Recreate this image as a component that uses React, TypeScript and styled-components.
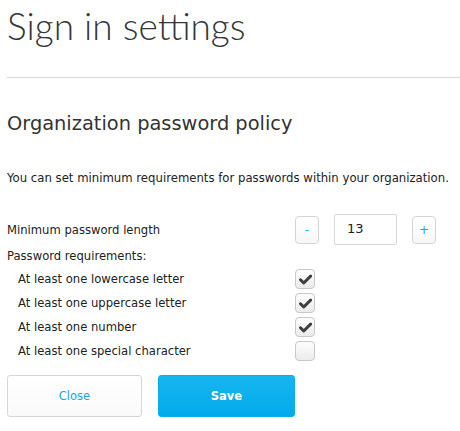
import React, { useState } from 'react'
import styled, { createGlobalStyle } from 'styled-components'

const GlobalStyle = createGlobalStyle`
  body {
    margin: 0;
    background: #fff;
    font-family: "DejaVu Sans", "Liberation Sans", sans-serif;
    color: #333;
  }
`

const Page = styled.div`
  padding: 0 0 0 7px;
  width: 453px;
`

const Title = styled.h1`
  margin: 0;
  padding-top: 4px;
  font-family: Lato, "Open Sans", sans-serif;
  font-weight: 300;
  font-size: 37px;
  line-height: 44px;
  color: #34373b;
`

const Divider = styled.hr`
  margin: 29px 0 0;
  border: 0;
  border-top: 1px solid #d8d8d8;
`

const SectionTitle = styled.h2`
  margin: 34px 0 0;
  font-weight: normal;
  font-size: 19.4px;
  line-height: 24px;
  color: #333;
`

const Description = styled.p`
  margin: 34px 0 0;
  font-size: 11.7px;
  line-height: 16px;
  color: #222;
`

const FormGrid = styled.div`
  margin-top: 28px;
  display: grid;
  grid-template-columns: 288px auto;
  align-items: center;
`

const Label = styled.div<{ indent?: boolean }>`
  font-size: 11.6px;
  line-height: 16px;
  color: #222;
  padding-left: ${({ indent }) => (indent ? '11px' : '0')};
`

const Stepper = styled.div`
  display: flex;
  align-items: center;
  gap: 15px;
`

const StepButton = styled.button`
  width: 24px;
  height: 28px;
  padding: 0;
  border: 1px solid #d4d4d4;
  border-radius: 4px;
  background: linear-gradient(#fff, #f7f7f7);
  color: #1aa9e6;
  font-family: "DejaVu Sans", sans-serif;
  font-size: 12px;
  cursor: pointer;
`

const NumberInput = styled.input`
  box-sizing: border-box;
  width: 63px;
  height: 31px;
  border: 1px solid #d8d8d8;
  border-radius: 2px;
  padding: 0 0 2px 12px;
  font-family: "DejaVu Sans", sans-serif;
  font-size: 13px;
  color: #222;
  outline: none;
`

const FullRow = styled.div`
  grid-column: 1 / span 2;
  height: 22px;
  display: flex;
  align-items: center;
`

const CheckRow = styled.div`
  display: contents;
`

const CheckCell = styled.div`
  height: 24px;
  display: flex;
  align-items: center;
`

const Box = styled.button<{ checked: boolean }>`
  width: 20px;
  height: 20px;
  padding: 0;
  border: 1px solid #c8c8c8;
  border-radius: 4px;
  background: linear-gradient(#fdfdfd, #ececec);
  display: flex;
  align-items: center;
  justify-content: center;
  cursor: pointer;
`

const Actions = styled.div`
  margin-top: 12px;
  display: flex;
  gap: 16px;
`

const ActionButton = styled.button<{ primary?: boolean }>`
  width: ${({ primary }) => (primary ? '137px' : '135px')};
  height: 42px;
  border-radius: 3px;
  font-family: "DejaVu Sans", sans-serif;
  font-size: 11.5px;
  cursor: pointer;
  border: 1px solid ${({ primary }) => (primary ? '#0aaeea' : '#d6d6d6')};
  background: ${({ primary }) => (primary ? 'linear-gradient(#16b5ef, #03aaeb)' : 'linear-gradient(#ffffff, #fafafa)')};
  color: ${({ primary }) => (primary ? '#fff' : '#1ba5e0')};
  font-weight: ${({ primary }) => (primary ? 'bold' : 'normal')};
`

const Check = () => (
  <svg width="13" height="11" viewBox="0 0 13 11">
    <path d="M1.5 5.8 L4.7 9 L11.6 2.1" fill="none" stroke="#3b3f45" strokeWidth="3" strokeLinecap="round" strokeLinejoin="round" />
  </svg>
)

const requirements = [
  { label: 'At least one lowercase letter', on: true },
  { label: 'At least one uppercase letter', on: true },
  { label: 'At least one number', on: true },
  { label: 'At least one special character', on: false },
]

export default function App() {
  const [length, setLength] = useState(13)
  const [checks, setChecks] = useState(requirements.map((r) => r.on))

  return (
    <Page>
      <GlobalStyle />
      <Title>Sign in settings</Title>
      <Divider />
      <SectionTitle>Organization password policy</SectionTitle>
      <Description>You can set minimum requirements for passwords within your organization.</Description>
      <FormGrid>
        <Label>Minimum password length</Label>
        <Stepper>
          <StepButton onClick={() => setLength(length - 1)}>-</StepButton>
          <NumberInput value={length} onChange={(e) => setLength(Number(e.target.value) || 0)} />
          <StepButton onClick={() => setLength(length + 1)}>+</StepButton>
        </Stepper>
        <FullRow>
          <Label>Password requirements:</Label>
        </FullRow>
        {requirements.map((r, i) => (
          <CheckRow key={r.label}>
            <Label indent>{r.label}</Label>
            <CheckCell>
              <Box
                checked={checks[i]}
                onClick={() => setChecks(checks.map((c, j) => (j === i ? !c : c)))}
              >
                {checks[i] && <Check />}
              </Box>
            </CheckCell>
          </CheckRow>
        ))}
      </FormGrid>
      <Actions>
        <ActionButton>Close</ActionButton>
        <ActionButton primary>Save</ActionButton>
      </Actions>
    </Page>
  )
}
